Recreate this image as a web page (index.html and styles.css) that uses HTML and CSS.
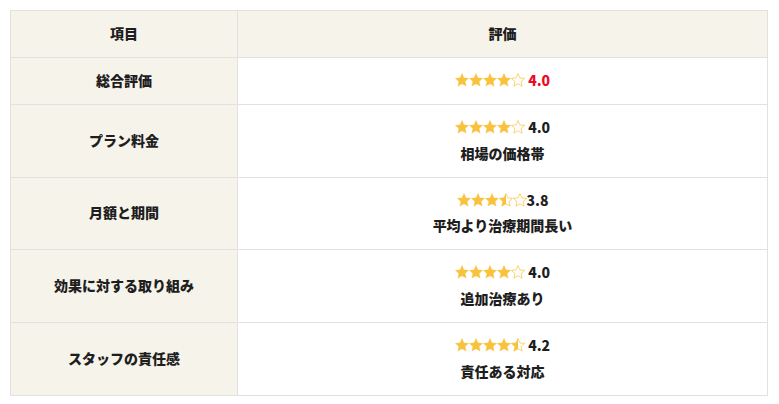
FILE: index.html
```html
<!DOCTYPE html>
<html lang="ja">
<head>
<meta charset="utf-8">
<link rel="stylesheet" href="styles.css">
</head>
<body>
<svg class="defs" width="0" height="0" aria-hidden="true">
  <defs>
    <linearGradient id="halfgrad" x1="0" x2="1" y1="0" y2="0">
      <stop offset="50%" stop-color="#f9c23c"/>
      <stop offset="50%" stop-color="#ffffff" stop-opacity="0"/>
    </linearGradient>
    <symbol id="star" viewBox="1.3 1.3 21.4 21.4">
      <path d="M12 2.2l2.95 6.6 7.15.7-5.4 4.8 1.6 7.05L12 17.7l-6.3 3.65 1.6-7.05-5.4-4.8 7.15-.7z"/>
    </symbol>
  </defs>
</svg>
<table class="rating">
  <thead>
    <tr><th class="item">項目</th><th class="eval">評価</th></tr>
  </thead>
  <tbody>
    <tr>
      <th class="item">総合評価</th>
      <td class="eval">
        <div class="line"><span class="stars"><svg class="s full"><use href="#star"/></svg><svg class="s full"><use href="#star"/></svg><svg class="s full"><use href="#star"/></svg><svg class="s full"><use href="#star"/></svg><svg class="s empty"><use href="#star"/></svg></span> <span class="score red">4.0</span></div>
      </td>
    </tr>
    <tr>
      <th class="item">プラン料金</th>
      <td class="eval">
        <div class="line"><span class="stars"><svg class="s full"><use href="#star"/></svg><svg class="s full"><use href="#star"/></svg><svg class="s full"><use href="#star"/></svg><svg class="s full"><use href="#star"/></svg><svg class="s empty"><use href="#star"/></svg></span> <span class="score">4.0</span></div>
        <div class="line">相場の価格帯</div>
      </td>
    </tr>
    <tr>
      <th class="item">月額と期間</th>
      <td class="eval">
        <div class="line"><span class="stars"><svg class="s full"><use href="#star"/></svg><svg class="s full"><use href="#star"/></svg><svg class="s full"><use href="#star"/></svg><svg class="s half"><use href="#star"/></svg><svg class="s empty"><use href="#star"/></svg></span><span class="score">3.8</span></div>
        <div class="line">平均より治療期間長い</div>
      </td>
    </tr>
    <tr>
      <th class="item">効果に対する取り組み</th>
      <td class="eval">
        <div class="line"><span class="stars"><svg class="s full"><use href="#star"/></svg><svg class="s full"><use href="#star"/></svg><svg class="s full"><use href="#star"/></svg><svg class="s full"><use href="#star"/></svg><svg class="s empty"><use href="#star"/></svg></span> <span class="score">4.0</span></div>
        <div class="line">追加治療あり</div>
      </td>
    </tr>
    <tr>
      <th class="item">スタッフの責任感</th>
      <td class="eval">
        <div class="line"><span class="stars"><svg class="s full"><use href="#star"/></svg><svg class="s full"><use href="#star"/></svg><svg class="s full"><use href="#star"/></svg><svg class="s full"><use href="#star"/></svg><svg class="s half"><use href="#star"/></svg></span> <span class="score">4.2</span></div>
        <div class="line">責任ある対応</div>
      </td>
    </tr>
  </tbody>
</table>
</body>
</html>
```
FILE: styles.css
```css
html, body {
  margin: 0;
  padding: 0;
  background: #ffffff;
}
body {
  padding: 10px 0 0 10px;
  font-family: "Noto Sans CJK JP", "Noto Sans", sans-serif;
  font-size: 14px;
  font-weight: 900;
  color: #1e1e1e;
}
.defs {
  display: block;
  width: 0;
  height: 0;
  overflow: hidden;
}
.rating {
  width: 758px;
  border-collapse: collapse;
  table-layout: fixed;
}
.rating th,
.rating td {
  border: 1px solid #e3e1df;
  text-align: center;
  vertical-align: middle;
  padding: 10px 8px 11px;
  line-height: 25px;
  font-weight: 900;
}
.rating th.item {
  width: 210px;
  background: #f6f3eb;
}
.rating thead th {
  background: #f6f3eb;
}
.rating td.eval {
  background: #ffffff;
}
.line {
  height: 25px;
  line-height: 25px;
  white-space: nowrap;
}
.line + .line {
  margin-top: 0.67px;
}
.stars {
  display: inline-flex;
  vertical-align: -1px;
}
.s {
  width: 14px;
  height: 14px;
  display: block;
}
.s.full {
  fill: #f9c23c;
  stroke: #f9c23c;
  stroke-width: 0.6;
}
.s.empty {
  fill: none;
  stroke: #f9c23c;
  stroke-width: 1.1;
}
.s.half {
  fill: url(#halfgrad);
  stroke: #f9c23c;
  stroke-width: 1.1;
}
.score.red {
  color: #ee0a24;
}
```
